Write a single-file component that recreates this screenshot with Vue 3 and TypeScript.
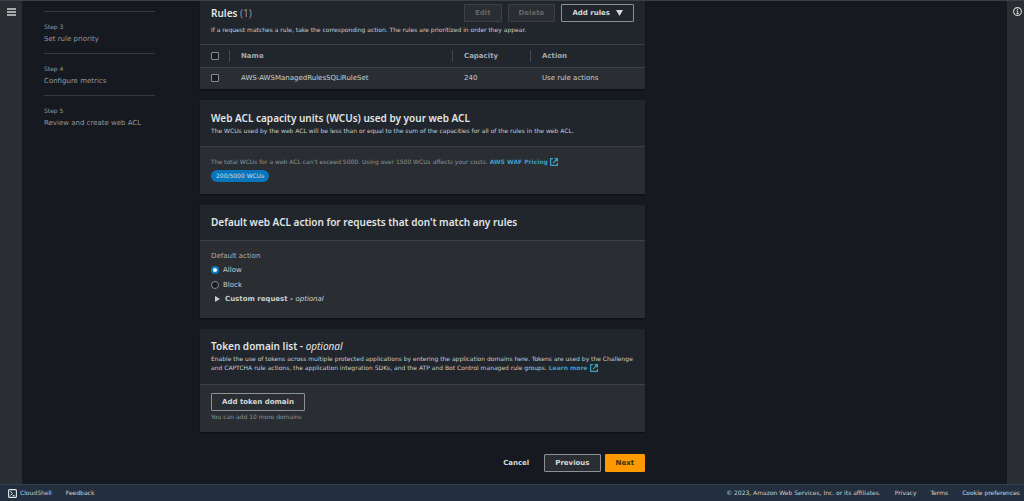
<script setup lang="ts">
import { ref } from 'vue'

interface Step {
  label: string
  name: string
  current?: boolean
}

interface Rule {
  name: string
  capacity: number
  action: string
}

const steps: Step[] = [
  { label: 'Step 2', name: 'Add rules and rule groups', current: true },
  { label: 'Step 3', name: 'Set rule priority' },
  { label: 'Step 4', name: 'Configure metrics' },
  { label: 'Step 5', name: 'Review and create web ACL' },
]

const rules: Rule[] = [
  { name: 'AWS-AWSManagedRulesSQLiRuleSet', capacity: 240, action: 'Use rule actions' },
]

const defaultAction = ref('allow')
const selected = ref<string[]>([])
</script>

<template>
  <div class="shell">
    <div class="workspace">
      <aside class="rail rail-left">
        <button class="icon-button" type="button" aria-label="Open navigation">
          <svg width="9" height="8" viewBox="0 0 9 8"><path d="M0 1h9M0 4h9M0 7h9" stroke="currentColor" stroke-width="1.500" /></svg>
        </button>
      </aside>

      <div class="page">
        <ol class="steps">
          <li v-for="step in steps" :key="step.label" class="step" :class="{ current: step.current }">
            <span class="step-label">{{ step.label }}</span>
            <span class="step-name">{{ step.name }}</span>
          </li>
        </ol>

        <main class="content">
          <section class="panel rules">
            <header class="panel-head">
              <div class="title-row">
                <h2>Rules <span class="count">({{ rules.length }})</span></h2>
                <div class="actions">
                  <button class="button" type="button" disabled>Edit</button>
                  <button class="button" type="button" disabled>Delete</button>
                  <button class="button menu" type="button">
                    Add rules
                    <svg width="7" height="6" viewBox="0 0 7 6"><path d="M0 0h7L3.500 6z" fill="currentColor" /></svg>
                  </button>
                </div>
              </div>
              <p>If a request matches a rule, take the corresponding action. The rules are prioritized in order they appear.</p>
            </header>
            <table>
              <thead>
                <tr>
                  <th class="select"><input type="checkbox" aria-label="Select all rules" /></th>
                  <th class="name"><span>Name</span></th>
                  <th class="capacity"><span>Capacity</span></th>
                  <th><span>Action</span></th>
                </tr>
              </thead>
              <tbody>
                <tr v-for="rule in rules" :key="rule.name">
                  <td class="select"><input v-model="selected" type="checkbox" :value="rule.name" :aria-label="rule.name" /></td>
                  <td><span>{{ rule.name }}</span></td>
                  <td><span>{{ rule.capacity }}</span></td>
                  <td><span>{{ rule.action }}</span></td>
                </tr>
              </tbody>
            </table>
          </section>

          <section class="panel">
            <header class="panel-head">
              <h2>Web ACL capacity units (WCUs) used by your web ACL</h2>
              <p>The WCUs used by the web ACL will be less than or equal to the sum of the capacities for all of the rules in the web ACL.</p>
            </header>
            <div class="panel-body usage">
              <p class="hint">
                The total WCUs for a web ACL can't exceed 5000. Using over 1500 WCUs affects your costs.
                <a href="#pricing">AWS WAF Pricing
                  <svg class="external" width="8" height="8" viewBox="0 0 8 8"><path d="M3 .6H.6v6.8h6.8V5M4.6.6h2.8v2.8M7.2.8 3 5" fill="none" stroke="currentColor" stroke-width="1.200" /></svg></a>
              </p>
              <span class="badge">200/5000 WCUs</span>
            </div>
          </section>

          <section class="panel">
            <header class="panel-head single">
              <h2>Default web ACL action for requests that don't match any rules</h2>
            </header>
            <div class="panel-body">
              <fieldset>
                <legend>Default action</legend>
                <label class="choice"><input v-model="defaultAction" type="radio" name="action" value="allow" />Allow</label>
                <label class="choice"><input v-model="defaultAction" type="radio" name="action" value="block" />Block</label>
              </fieldset>
              <button class="expander" type="button" aria-expanded="false">
                <svg width="5" height="6" viewBox="0 0 5 6"><path d="M0 0l5 3-5 3z" fill="currentColor" /></svg>
                <span>Custom request - <em>optional</em></span>
              </button>
            </div>
          </section>

          <section class="panel">
            <header class="panel-head domains">
              <h2>Token domain list - <em>optional</em></h2>
              <p>
                Enable the use of tokens across multiple protected applications by entering the application domains here. Tokens are used by the Challenge and CAPTCHA rule actions, the application integration SDKs, and the ATP and Bot Control managed rule groups.
                <a href="#tokens">Learn more
                  <svg class="external" width="8" height="8" viewBox="0 0 8 8"><path d="M3 .6H.6v6.8h6.8V5M4.6.6h2.8v2.8M7.2.8 3 5" fill="none" stroke="currentColor" stroke-width="1.200" /></svg></a>
              </p>
            </header>
            <div class="panel-body tokens">
              <button class="button" type="button">Add token domain</button>
              <p class="hint">You can add 10 more domains</p>
            </div>
          </section>

          <div class="wizard-actions">
            <button class="button link" type="button">Cancel</button>
            <button class="button filled" type="button">Previous</button>
            <button class="button primary" type="button">Next</button>
          </div>
        </main>
      </div>

      <aside class="rail rail-right">
        <button class="icon-button" type="button" aria-label="Open info">
          <svg width="9" height="9" viewBox="0 0 9 9"><circle cx="4.500" cy="4.500" r="3.900" fill="none" stroke="currentColor" stroke-width="1.100" /><path d="M3.500 4h1.200v2.600M3.400 6.600h2.400M4 2.500h1.100" fill="none" stroke="currentColor" /></svg>
        </button>
      </aside>
    </div>

    <footer class="footer">
      <a class="cloudshell" href="#cloudshell">
        <svg width="9" height="9" viewBox="0 0 9 9"><rect x=".6" y=".6" width="7.800" height="7.800" rx="1" fill="none" stroke="#e4e8e8" stroke-width="1.100" /><path d="M2.300 2.300 4.500 4.300 2.300 6.500M4.700 6.600h2" fill="none" stroke="#e4e8e8" /></svg>
        CloudShell
      </a>
      <a href="#feedback">Feedback</a>
      <span class="copyright">© 2023, Amazon Web Services, Inc. or its affiliates.</span>
      <a href="#privacy">Privacy</a>
      <a href="#terms">Terms</a>
      <a href="#cookies">Cookie preferences</a>
    </footer>
  </div>
</template>

<style>
body {
  background: #16191f;
}
</style>

<style scoped>
.shell {
  display: flex;
  flex-direction: column;
  height: 100vh;
  overflow: hidden;
  box-sizing: border-box;
  border-top: 1px solid #3a4046;
  color: #c8cece;
  font-family: "DejaVu Sans", "Noto Sans", sans-serif;
  font-size: 7px;
  line-height: 12px;
}
.shell *,
.shell *::before {
  box-sizing: border-box;
}
button,
input {
  margin: 0;
  font: inherit;
  color: inherit;
}
h2,
p {
  margin: 0;
}
a {
  color: #3c9fc4;
  font-weight: 700;
  text-decoration: none;
}
.workspace {
  display: flex;
  flex: 1;
  min-height: 0;
}
.rail {
  flex: none;
  background: #2a2e33;
  padding-top: 6px;
  text-align: center;
}
.rail-left {
  width: 22px;
}
.rail-right {
  width: 17px;
  padding-left: 4px;
}
.icon-button {
  display: inline-flex;
  padding: 0;
  border: 0;
  background: none;
  color: #d0d4d4;
}
.rail-left .icon-button {
  padding-top: 1px;
}
.page {
  display: grid;
  grid-template-columns: 111px minmax(0, 445px);
  gap: 45px;
  align-items: start;
  flex: 1;
  padding-left: 22px;
  overflow: hidden;
}
.steps {
  list-style: none;
  margin: -22px 0 0;
  padding: 0;
  color: #949b9d;
}
.step {
  display: flex;
  flex-direction: column;
  padding-bottom: 8px;
}
.step + .step {
  padding-top: 9px;
  border-top: 1px solid #353a41;
}
.step-label,
.panel-head p,
.hint,
.badge,
.footer {
  font-size: 6px;
}
.current .step-name {
  color: #c8cece;
  font-family: "Noto Sans", sans-serif;
  font-weight: 700;
}
.content {
  display: flex;
  flex-direction: column;
  gap: 11px;
}
.panel {
  background: #2a2e33;
  box-shadow: 0 1px 1px #0d1014;
}
.panel-head {
  padding: 11px;
  background: #21252c;
  border-bottom: 1px solid #3c4147;
}
.panel-head.single {
  padding: 10px 11px 11px;
}
.panel-head.domains {
  padding: 10px 8px 12px 11px;
}
.panel-head p {
  margin-top: 1px;
  line-height: 9px;
}
h2 {
  color: #e2e5e5;
  font-family: "Noto Sans", sans-serif;
  font-size: 10px;
  font-weight: 600;
  line-height: 14px;
}
.count {
  color: #8f989a;
  font-weight: 400;
}
.rules .panel-head {
  padding: 3px 11px 10px;
}
.title-row {
  display: flex;
  align-items: center;
  justify-content: space-between;
  margin-bottom: 3px;
}
.title-row + p {
  margin-top: 0;
}
.actions {
  display: flex;
  gap: 6px;
}
.button {
  display: inline-flex;
  align-items: center;
  justify-content: center;
  gap: 6px;
  height: 18px;
  padding: 0 10px;
  border: 1px solid #899294;
  border-radius: 1px;
  background: transparent;
  color: #d5dada;
  font-weight: 700;
}
.button:disabled {
  background: #2a2e33;
  border-color: #3b4147;
  color: #60676b;
}
table {
  width: 100%;
  border-collapse: collapse;
  table-layout: fixed;
}
th,
td {
  height: 22px;
  padding: 0;
  text-align: left;
}
thead {
  background: #21252c;
  border-bottom: 1px solid #3c4147;
  color: #a3abac;
}
th span,
td span {
  display: block;
  padding-left: 11px;
}
th span {
  border-left: 1px solid #40464c;
}
td span {
  padding-left: 12px;
}
.select {
  width: 29px;
  padding-left: 11px;
}
.name {
  width: 223px;
}
.capacity {
  width: 78px;
}
input {
  appearance: none;
  display: block;
  width: 8px;
  height: 8px;
  border: 1px solid #858d90;
  background: #171b20;
}
input[type='checkbox'] {
  border-radius: 1px;
}
input[type='radio'] {
  border-radius: 50%;
}
input[type='radio']:checked {
  border: 2px solid #087cc4;
  background: #ffffff;
}
.panel-body {
  padding: 9px 11px 12px;
}
.hint {
  color: #8a9395;
}
.external {
  vertical-align: -2px;
}
.badge {
  display: table;
  margin-top: 2px;
  padding: 0 5px;
  border-radius: 6px;
  background: #0875bd;
  color: #c9e0e8;
}
fieldset {
  margin: 0;
  padding: 0;
  border: 0;
}
legend {
  padding: 0;
  color: #a9b0b1;
}
.choice {
  display: flex;
  align-items: center;
  gap: 4px;
  height: 15px;
}
.expander {
  display: flex;
  align-items: center;
  gap: 5px;
  height: 14px;
  padding: 0 4px;
  border: 0;
  background: none;
  font-weight: 700;
}
em {
  font-weight: 400;
}
.tokens {
  padding: 8px 11px 9px;
}
.wizard-actions {
  display: flex;
  justify-content: flex-end;
  gap: 4px;
  margin-top: 11px;
}
.link {
  border-color: transparent;
}
.filled {
  background: #2a2e33;
}
.primary {
  border-color: #ff9900;
  background: #ff9900;
  color: #3a2b14;
}
.footer {
  display: flex;
  align-items: center;
  gap: 14px;
  height: 17px;
  padding: 0 4px 0 8px;
  border-top: 1px solid #303d4b;
  background: #232f3e;
}
.footer a {
  color: #d0d6da;
  font-weight: 400;
}
.footer .cloudshell {
  display: flex;
  align-items: center;
  gap: 3px;
  color: #a9d0e0;
}
.copyright {
  margin-left: auto;
}
</style>
